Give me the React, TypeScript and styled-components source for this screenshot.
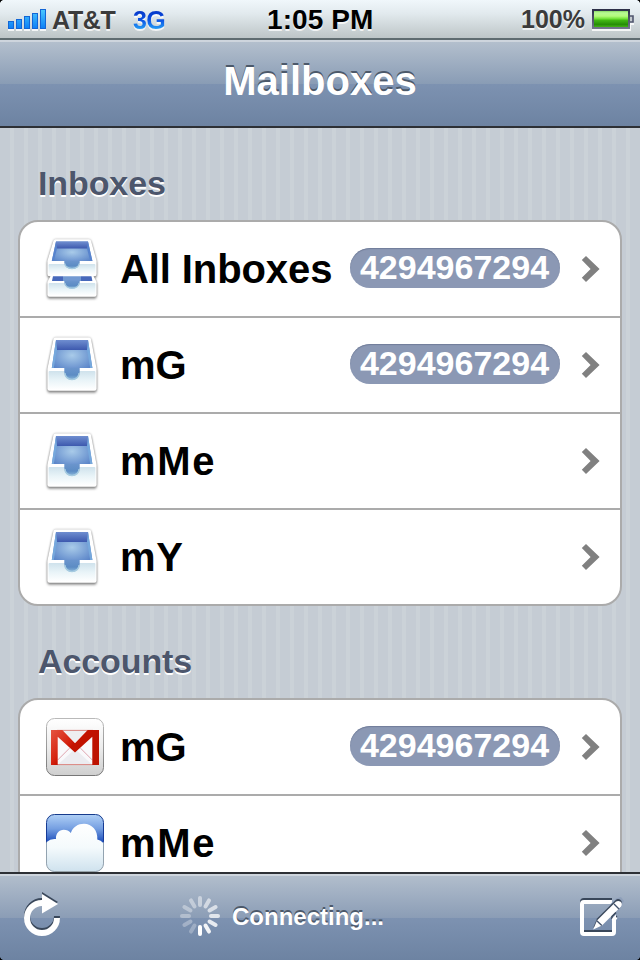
import { ReactNode } from 'react';
import styled, { createGlobalStyle, css } from 'styled-components';

type IconName = 'allInboxes' | 'inbox' | 'gmail' | 'mobileMe';

type Mailbox = {
  name: string;
  icon: IconName;
  unread?: number;
  tracking?: number;
};

const INBOXES: Mailbox[] = [
  { name: 'All Inboxes', icon: 'allInboxes', unread: 4294967294, tracking: -0.1 },
  { name: 'mG', icon: 'inbox', unread: 4294967294 },
  { name: 'mMe', icon: 'inbox', tracking: 1.7 },
  { name: 'mY', icon: 'inbox', tracking: 0.6 },
];

const ACCOUNTS: Mailbox[] = [
  { name: 'mG', icon: 'gmail', unread: 4294967294 },
  { name: 'mMe', icon: 'mobileMe', tracking: 1.7 },
];

const SIGNAL_HEIGHTS = [8, 10, 13, 16, 20];
const SPOKE_OPACITY = [0.47, 0.57, 0.65, 0.74, 0.82, 0.9, 1, 0.27, 0.3, 0.33, 0.36, 0.41];

function App() {
  return (
    <>
      <GlobalStyle />
      <TrayDefs />
      <Screen>
        <StatusBar>
          <Signal />
          <Carrier>AT&amp;T</Carrier>
          <Network>3G</Network>
          <Clock>1:05 PM</Clock>
          <BatteryLevel>100%</BatteryLevel>
          <Battery />
        </StatusBar>
        <NavigationBar>
          <Title>Mailboxes</Title>
        </NavigationBar>
        <Content>
          <MailboxGroup title="Inboxes" mailboxes={INBOXES} />
          <MailboxGroup title="Accounts" mailboxes={ACCOUNTS} />
        </Content>
        <Toolbar>
          <RefreshIcon />
          <Status>
            <Spinner />
            <StatusText>Connecting...</StatusText>
          </Status>
          <ComposeIcon />
        </Toolbar>
        <Corner $vertical="top" $horizontal="left" />
        <Corner $vertical="top" $horizontal="right" />
        <Corner $vertical="bottom" $horizontal="left" />
        <Corner $vertical="bottom" $horizontal="right" />
      </Screen>
    </>
  );
}

export default App;

function MailboxGroup({ title, mailboxes }: { title: string; mailboxes: Mailbox[] }) {
  return (
    <section>
      <GroupTitle>{title}</GroupTitle>
      <Group>
        {mailboxes.map(({ name, icon, unread, tracking }) => (
          <Row key={name}>
            {icons[icon]}
            <Name $tracking={tracking}>{name}</Name>
            {unread && <Badge>{unread}</Badge>}
            <Chevron viewBox="0 0 18 26">
              <path d="M4 0L17.6 13L4 25.9L-.2 21.7L8.6 13L-.2 4Z" fill="#808080" />
            </Chevron>
          </Row>
        ))}
      </Group>
    </section>
  );
}

function Signal() {
  return (
    <SignalIcon viewBox="0 0 38 22">
      {SIGNAL_HEIGHTS.map((height, i) => (
        <g key={height}>
          <rect x={i * 8} y={20} width={6} height={2} fill="#fff" fillOpacity={0.8} />
          <rect x={i * 8} y={20 - height} width={6} height={height} fill="#1266d6" />
          <rect x={i * 8 + 1} y={21 - height} width={4} height={height - 2} fill="url(#signal)" />
        </g>
      ))}
      <defs>
        <linearGradient id="signal" gradientUnits="userSpaceOnUse" x1="0" y1="0" x2="0" y2="20">
          <stop offset="0" stopColor="#4ccbff" />
          <stop offset="1" stopColor="#0a7df5" />
        </linearGradient>
      </defs>
    </SignalIcon>
  );
}

function Battery() {
  return (
    <BatteryIcon viewBox="0 0 42 22">
      <path d="M0 21H38V15H42" fill="none" stroke="#fff" strokeWidth="2" strokeOpacity=".8" />
      <rect x="1" y="1" width="36" height="18" fill="url(#charge)" stroke="url(#shell)" strokeWidth="2" />
      <path d="M38 7H41V13H38" fill="#c3c9ce" stroke="#50556e" strokeWidth="1.6" />
      <defs>
        <linearGradient id="charge" x1="0" y1="0" x2="0" y2="1">
          <stop offset="0" stopColor="#6fc84b" />
          <stop offset=".16" stopColor="#b8f994" />
          <stop offset=".34" stopColor="#b4fa7d" />
          <stop offset=".5" stopColor="#6cdf31" />
          <stop offset=".56" stopColor="#43b914" />
          <stop offset=".8" stopColor="#268d06" />
          <stop offset="1" stopColor="#4cc01a" />
        </linearGradient>
        <linearGradient id="shell" gradientUnits="userSpaceOnUse" x1="0" y1="0" x2="0" y2="20">
          <stop offset="0" stopColor="#2a2d46" />
          <stop offset="1" stopColor="#74778c" />
        </linearGradient>
      </defs>
    </BatteryIcon>
  );
}

// gradients shared by every tray
function TrayDefs() {
  return (
    <Hidden>
      <defs>
        <linearGradient id="trayBack" x1="0" y1="0" x2="0" y2="1">
          <stop offset="0" stopColor="#6f8ed0" />
          <stop offset="1" stopColor="#3d59ae" />
        </linearGradient>
        <radialGradient id="trayFloor" cx=".5" cy=".55" r=".6">
          <stop offset="0" stopColor="#a9cbe9" />
          <stop offset="1" stopColor="#5b85c9" />
        </radialGradient>
        <linearGradient id="trayFront" x1="0" y1="0" x2="0" y2="1">
          <stop offset="0" stopColor="#cfe2ec" />
          <stop offset=".5" stopColor="#e9f4f8" />
          <stop offset="1" stopColor="#fff" />
        </linearGradient>
        <linearGradient id="trayNotch" x1="0" y1="0" x2="0" y2="1">
          <stop offset="0" stopColor="#6b95cd" />
          <stop offset=".6" stopColor="#5c8cc4" />
          <stop offset="1" stopColor="#8fbbdc" />
        </linearGradient>
      </defs>
    </Hidden>
  );
}

function InboxIcon() {
  return (
    <TrayIcon viewBox="0 0 58 58">
      <path d="M9.5 1.5H43Q44.6 1.5 45 3L50.6 33V52.5Q50.6 54.7 48.5 54.7H3.5Q1.4 54.7 1.4 52.5V33L7.5 3Q8 1.5 9.5 1.5Z" fill="#fff" />
      <path d="M10 4H42L46.4 32H5.8Z" fill="url(#trayFloor)" />
      <rect x="10.2" y="4" width="31.6" height="10" fill="url(#trayBack)" />
      <path d="M10 4L5.8 32H7.8L11 14M42 4L46.4 32H44.2L41 14" fill="#76a8dc" />
      <path d="M2 32H18.3V36H2ZM33.7 32H50V36H33.7Z" fill="#fff" />
      <rect x="2.6" y="35" width="46.8" height="18.6" rx="1" fill="url(#trayFront)" />
      <path d="M18.3 31.8H33.7V36A7.7 8 0 0 1 18.3 36Z" fill="url(#trayNotch)" />
      <path d="M18.9 37A7.1 6.6 0 0 0 33.1 37" fill="none" stroke="#a6cbe0" strokeWidth="1.5" />
    </TrayIcon>
  );
}

function AllInboxesIcon() {
  return (
    <TrayIcon viewBox="0 0 58 58">
      <path d="M5 35H47L50.6 42V54.5Q50.6 56.7 48.5 56.7H3.5Q1.4 56.7 1.4 54.5V42Z" fill="#fff" />
      <path d="M7 36H45.4L46.4 41H6Z" fill="#4668bb" />
      <path d="M17 36H35V41H17Z" fill="#7199d2" />
      <rect x="2.6" y="43" width="46.8" height="12.6" rx="1" fill="url(#trayFront)" />
      <path d="M18.3 40.5H33.7V42A7.7 6.8 0 0 1 18.3 42Z" fill="url(#trayNotch)" />
      <path d="M18.9 43A7.1 5.2 0 0 0 33.1 43" fill="none" stroke="#a6cbe0" strokeWidth="1.2" />
      <path d="M9.5 -.7H43Q44.6 -.7 45 .8L50.6 21V34Q50.6 36.2 48.5 36.2H3.5Q1.4 36.2 1.4 34V21L7.5 .8Q8 -.7 9.5 -.7Z" fill="#fff" />
      <path d="M10 1.5H42L46.4 21H5.8Z" fill="url(#trayFloor)" />
      <rect x="10" y="1.5" width="32" height="7" fill="url(#trayBack)" />
      <path d="M10 1.5L5.8 21H7.8L11 8.5M42 1.5L46.4 21H44.2L41 8.5" fill="#5783cd" />
      <rect x="2.6" y="24" width="46.8" height="11" rx="1" fill="url(#trayFront)" />
      <path d="M18.3 20.8H33.7V22.5A7.7 6.6 0 0 1 18.3 22.5Z" fill="url(#trayNotch)" />
      <path d="M18.9 23.4A7.1 5.2 0 0 0 33.1 23.4" fill="none" stroke="#a6cbe0" strokeWidth="1.2" />
    </TrayIcon>
  );
}

function GmailIcon() {
  return (
    <Icon viewBox="0 0 58 58">
      <defs>
        <linearGradient id="gmailTile" x1="0" y1="0" x2="0" y2="1">
          <stop offset="0" stopColor="#fff" />
          <stop offset=".5" stopColor="#ededed" />
          <stop offset="1" stopColor="#cfcfcf" />
        </linearGradient>
        <linearGradient id="gmailEdge" x1="0" y1="0" x2="0" y2="1">
          <stop offset="0" stopColor="#b9b9b9" />
          <stop offset="1" stopColor="#777" />
        </linearGradient>
        <linearGradient id="gmailRed" gradientUnits="userSpaceOnUse" x1="5" y1="14" x2="38" y2="40">
          <stop offset="0" stopColor="#e4523f" />
          <stop offset=".45" stopColor="#d62512" />
          <stop offset=".6" stopColor="#c41200" />
          <stop offset="1" stopColor="#bd1200" />
        </linearGradient>
      </defs>
      <rect x=".5" y=".5" width="57" height="57" rx="8" fill="url(#gmailTile)" stroke="url(#gmailEdge)" />
      <rect x="5" y="12" width="48" height="35" fill="#f9f9fb" />
      <path d="M12 46.5H46L29 31Z" fill="#ececf0" />
      <path d="M17 12.5H41L29 25Z" fill="#eeeef0" />
      <path d="M11.7 42L23.5 30.2M46.3 42L34.5 30.2" stroke="#dfa4ae" strokeWidth="1" />
      <path d="M11 12.4H47M11 46.6H47" stroke="#d77770" strokeWidth=".9" />
      <path d="M5 12H16.3L29 25.2L41.7 12H53V47H46.3V18.8L29 34.5L11.7 18.8V47H5Z" fill="url(#gmailRed)" />
    </Icon>
  );
}

function MobileMeIcon() {
  return (
    <Icon viewBox="0 0 58 58">
      <defs>
        <linearGradient id="sky" x1="0" y1="0" x2="0" y2="1">
          <stop offset="0" stopColor="#b0d0f6" />
          <stop offset=".25" stopColor="#759fe1" />
          <stop offset=".5" stopColor="#1749b9" />
        </linearGradient>
        <linearGradient id="cloud" x1="0" y1="0" x2="0" y2="1">
          <stop offset="0" stopColor="#fff" />
          <stop offset=".5" stopColor="#f4fafc" />
          <stop offset="1" stopColor="#cfe2ee" />
        </linearGradient>
        <linearGradient id="skyEdge" x1="0" y1="0" x2="0" y2="1">
          <stop offset="0" stopColor="#163b8c" />
          <stop offset=".47" stopColor="#163b9c" />
          <stop offset=".5" stopColor="#8fa2b4" />
          <stop offset="1" stopColor="#98a4aa" />
        </linearGradient>
      </defs>
      <rect x=".5" y=".5" width="57" height="57" rx="8" fill="url(#sky)" />
      <path
        d="M.7 28Q4.5 24.3 10 25C9.5 20 13 15.8 17.8 15.8Q22 15.8 24.8 19C26.8 13 32 9.7 38 9.7C46 9.7 52 16.5 51.3 25.5Q55 26.3 57.3 29V50Q57.3 57.3 50 57.3H8Q.7 57.3 .7 50Z"
        fill="url(#cloud)"
      />
      <rect x=".5" y=".5" width="57" height="57" rx="8" fill="none" stroke="url(#skyEdge)" />
    </Icon>
  );
}

function RefreshIcon() {
  const shape = (
    <>
      <path d="M18 14A15 15 0 1 0 33 29" fill="none" stroke="currentColor" strokeWidth="6" />
      <path d="M18 5L34 15L18 24.5Z" fill="currentColor" />
    </>
  );

  return (
    <ToolIcon $width={38} $lift={8} viewBox="0 0 38 48">
      <g color="#39475a" transform="translate(0 -2)">{shape}</g>
      <g color="#fff">{shape}</g>
    </ToolIcon>
  );
}

function ComposeIcon() {
  const frame = (
    <path
      d="M32 9H4Q2 9 2 11V39Q2 41 4 41H32Q34 41 34 39V26L36 24"
      fill="none"
      stroke="currentColor"
      strokeWidth="4"
    />
  );

  return (
    <ToolIcon $width={42} viewBox="0 0 42 48">
      <g color="#39475a" transform="translate(0 -2)">{frame}</g>
      <g color="#fff">{frame}</g>
      <path d="M29.5 12L36 5.5L41 4L44 8L35 25H31Z" fill="#8e9fb9" />
      <path d="M13.4 34.4L17 25.6L35.5 7.2Q38 5 40.6 7Q42.8 9 41 12L22 31Z" fill="#39475a" />
      <path d="M13.2 36.4L17 27.4L35.8 8.8Q38.2 7 40.6 8.8Q42.8 11 41 13.4L22 32.6Z" fill="#fff" />
      <path d="M34 11L39 16M16.8 27.8L21.8 32.4" fill="none" stroke="#43536c" strokeWidth="1.4" />
      <path d="M32 26V23.5L36 19.5" fill="none" stroke="#39475a" strokeWidth="1.6" />
      <path d="M32 28V25.5L36 21.5V28Z" fill="#fff" />
    </ToolIcon>
  );
}

function Spinner() {
  return (
    <SpinnerIcon viewBox="-20 -20 40 40">
      {SPOKE_OPACITY.map((opacity, i) => (
        <path
          key={opacity}
          d="M0 -18V-11"
          stroke="#fff"
          strokeWidth="4"
          strokeLinecap="round"
          strokeOpacity={opacity}
          transform={`rotate(${i * 30})`}
        />
      ))}
    </SpinnerIcon>
  );
}

const GlobalStyle = createGlobalStyle`
  * {
    box-sizing: border-box;
  }

  body {
    margin: 0;
    background: #000;
    font-family: 'Liberation Sans', Arial, sans-serif;
    font-weight: 700;
  }

  svg {
    display: block;
    flex-shrink: 0;
    overflow: visible;
  }
`;

const Hidden = styled.svg`
  position: absolute;
  width: 0;
  height: 0;
`;

const Screen = styled.div`
  position: relative;
  display: flex;
  flex-direction: column;
  width: 640px;
  height: 960px;
  overflow: hidden;
`;

const StatusBar = styled.header`
  display: grid;
  grid-template-columns: 44px 81px 134px 228px 1fr 42px;
  flex-shrink: 0;
  height: 40px;
  padding: 0 6px 0 8px;
  border-bottom: 2px solid #5f6c70;
  background: linear-gradient(#f0f7fb, #e2eaee 35%, #bdc5c7);
  white-space: nowrap;
`;

const statusText = css`
  color: #3b3b3b;
  font-size: 25px;
  text-shadow: 0 2px 0 rgba(255, 255, 255, 0.75);
`;

const Carrier = styled.span`
  ${statusText};
  line-height: 40px;
  letter-spacing: -0.3px;
`;

const Network = styled.span`
  font-size: 25px;
  line-height: 40px;
  letter-spacing: -0.6px;
  color: transparent;
  background: linear-gradient(#0638c9 28%, #0b52e4 50%, #28a5f6 75%);
  background-clip: text;
  filter: drop-shadow(0 2px 0 rgba(255, 255, 255, 0.75));
`;

const Clock = styled.span`
  ${statusText};
  color: #000;
  font-size: 28px;
  line-height: 39px;
  letter-spacing: 0.1px;
`;

const BatteryLevel = styled.span`
  ${statusText};
  padding-right: 7px;
  line-height: 39px;
  text-align: right;
`;

const SignalIcon = styled.svg`
  width: 38px;
  height: 22px;
  margin-top: 9px;
`;

const BatteryIcon = styled.svg`
  width: 42px;
  height: 22px;
  margin-top: 9px;
`;

const NavigationBar = styled.nav`
  flex-shrink: 0;
  height: 88px;
  border-top: 2px solid #ced5dd;
  border-bottom: 2px solid #2d3035;
  background: linear-gradient(#b3bfcd, #899cb5 50%, #7d92b1 50%, #6d83a2);
`;

const Title = styled.h1`
  margin: 0;
  color: #fff;
  font-size: 40px;
  line-height: 78px;
  text-align: center;
  text-shadow: 0 -2px 0 #4c596a;
`;

const Content = styled.main`
  flex: 1;
  min-height: 0;
  overflow: hidden;
  background: repeating-linear-gradient(90deg, #c5ccd4 0 10px, #cbd2d8 10px 14px);
`;

const GroupTitle = styled.h2`
  height: 92px;
  margin: 0;
  padding: 36px 38px 0;
  color: #4c566c;
  font-size: 34px;
  line-height: 38px;
  letter-spacing: -0.1px;
  text-shadow: 0 2px 0 #fff;
`;

const Group = styled.ul`
  margin: 0 18px;
  padding: 0;
  border: 2px solid #ababab;
  border-radius: 20px;
  background: #fff;
  list-style: none;
`;

const Row = styled.li`
  display: flex;
  align-items: center;
  height: 94px;
  padding: 0 20px 0 26px;

  & + & {
    height: 96px;
    border-top: 2px solid #ababab;
  }
`;

const Name = styled.span<{ $tracking?: number }>`
  flex: 1;
  margin-left: 16px;
  font-size: 40px;
  line-height: 46px;
  letter-spacing: ${({ $tracking = 0 }) => $tracking}px;
  white-space: nowrap;
`;

const Badge = styled.span`
  width: 210px;
  height: 40px;
  margin: -2px 22px 0 0;
  padding-right: 1px;
  border-radius: 20px;
  background: #8b98b4;
  box-shadow: inset 0 1px 1px #717d99;
  color: #fff;
  font-size: 34px;
  line-height: 38px;
  text-align: center;
`;

const Chevron = styled.svg`
  width: 18px;
  height: 26px;
`;

const Icon = styled.svg`
  width: 58px;
  height: 58px;
`;

const TrayIcon = styled(Icon)`
  filter: drop-shadow(0 0 1px rgba(0, 0, 0, 0.3)) drop-shadow(0 2px 1px rgba(0, 0, 0, 0.4));
`;

const Toolbar = styled.footer`
  display: grid;
  grid-template-columns: 156px 1fr 42px;
  flex-shrink: 0;
  align-items: center;
  height: 88px;
  padding: 0 18px 0 24px;
  border-top: 2px solid #2d3035;
  box-shadow: inset 0 2px 0 #ced5dd;
  background: linear-gradient(#b3bfcd, #8b9db6 51%, #7d92b1 51%, #6d83a2);
`;

const ToolIcon = styled.svg<{ $width: number; $lift?: number }>`
  width: ${({ $width }) => $width}px;
  height: 48px;
  margin-bottom: ${({ $lift = 0 }) => $lift}px;
`;

const Status = styled.div`
  display: flex;
  align-items: center;
  gap: 12px;
  margin-bottom: 2px;
`;

const SpinnerIcon = styled.svg`
  width: 40px;
  height: 40px;
`;

const StatusText = styled.span`
  margin-top: 2px;
  color: #fff;
  font-size: 24px;
  line-height: 28px;
  text-shadow: 0 -2px 0 #4c596a;
`;

const Corner = styled.i<{ $vertical: 'top' | 'bottom'; $horizontal: 'left' | 'right' }>`
  position: absolute;
  ${({ $vertical }) => $vertical}: 0;
  ${({ $horizontal }) => $horizontal}: 0;
  width: 4px;
  height: 4px;
  background: radial-gradient(
    circle at ${({ $horizontal }) => ($horizontal === 'left' ? 'right' : 'left')}
      ${({ $vertical }) => ($vertical === 'top' ? 'bottom' : 'top')},
    transparent 3.6px,
    #000 4.4px
  );
`;

const icons: Record<IconName, ReactNode> = {
  allInboxes: <AllInboxesIcon />,
  inbox: <InboxIcon />,
  gmail: <GmailIcon />,
  mobileMe: <MobileMeIcon />,
};
